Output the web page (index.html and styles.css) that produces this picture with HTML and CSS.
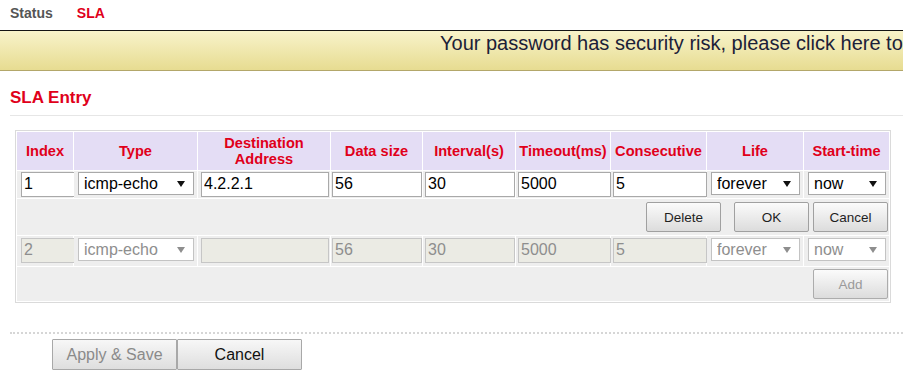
FILE: index.html
```html
<!DOCTYPE html>
<html lang="en">
<head>
<meta charset="utf-8">
<title>SLA</title>
<link rel="stylesheet" href="styles.css">
</head>
<body>
<nav class="tabs">
  <span class="tab">Status</span>
  <span class="tab tab-active">SLA</span>
</nav>
<div class="banner">Your password has security risk, please click here to change it.</div>
<section class="section">
  <h2 class="section-title">SLA Entry</h2>
  <table class="sla">
    <colgroup>
      <col class="w-idx"><col class="w-type"><col class="w-dest"><col class="w-size"><col class="w-int"><col class="w-tmo"><col class="w-con"><col class="w-life"><col class="w-start">
    </colgroup>
    <thead>
      <tr>
        <th>Index</th>
        <th>Type</th>
        <th>Destination<br>Address</th>
        <th>Data size</th>
        <th>Interval(s)</th>
        <th>Timeout(ms)</th>
        <th>Consecutive</th>
        <th>Life</th>
        <th>Start-time</th>
      </tr>
    </thead>
    <tbody>
      <tr class="row-edit">
        <td><input class="f f-idx" type="text" value="1"></td>
        <td><span class="sel s-type"><select><option>icmp-echo</option></select></span></td>
        <td><input class="f f-dest" type="text" value="4.2.2.1"></td>
        <td><input class="f f-size" type="text" value="56"></td>
        <td><input class="f f-int" type="text" value="30"></td>
        <td><input class="f f-tmo" type="text" value="5000"></td>
        <td><input class="f f-con" type="text" value="5"></td>
        <td><span class="sel s-life"><select><option>forever</option></select></span></td>
        <td><span class="sel s-start"><select><option>now</option></select></span></td>
      </tr>
      <tr class="row-btns">
        <td colspan="9" class="cell-btns">
          <div class="btns">
            <button class="btn" type="button">Delete</button>
            <button class="btn btn-ok" type="button">OK</button>
            <button class="btn btn-cancel" type="button">Cancel</button>
          </div>
        </td>
      </tr>
      <tr class="row-new">
        <td><input class="f f-idx" type="text" value="2" disabled></td>
        <td><span class="sel sel-off s-type"><select disabled><option>icmp-echo</option></select></span></td>
        <td><input class="f f-dest" type="text" value="" disabled></td>
        <td><input class="f f-size" type="text" value="56" disabled></td>
        <td><input class="f f-int" type="text" value="30" disabled></td>
        <td><input class="f f-tmo" type="text" value="5000" disabled></td>
        <td><input class="f f-con" type="text" value="5" disabled></td>
        <td><span class="sel sel-off s-life"><select disabled><option>forever</option></select></span></td>
        <td><span class="sel sel-off s-start"><select disabled><option>now</option></select></span></td>
      </tr>
      <tr class="row-add">
        <td colspan="9" class="cell-btns">
          <div class="btns">
            <button class="btn" type="button" disabled>Add</button>
          </div>
        </td>
      </tr>
    </tbody>
  </table>
</section>
<div class="actions">
  <button class="big-btn" type="button" disabled>Apply &amp; Save</button>
  <button class="big-btn" type="button">Cancel</button>
</div>
</body>
</html>
```
FILE: styles.css
```css
body {
  margin: 0;
  font-family: "Liberation Sans", Arial, sans-serif;
  background: #ffffff;
  color: #000000;
}

/* top tabs */
.tabs {
  display: flex;
  gap: 24px;
  height: 30px;
  box-sizing: border-box;
  padding: 5px 0 0 10px;
}
.tab {
  font-size: 14px;
  font-weight: bold;
  line-height: 16px;
  color: #555555;
}
.tab-active {
  color: #e0001a;
}

/* warning banner */
.banner {
  border-top: 1px solid #141414;
  border-bottom: 1px solid #b3a76a;
  background: linear-gradient(#f8f3ca, #e7dc91);
  height: 39px;
  padding-left: 440px;
  font-size: 20px;
  line-height: 24px;
  color: #1b2038;
  white-space: nowrap;
  overflow: hidden;
}

/* section */
.section {
  padding-left: 10px;
}
.section-title {
  margin: 17px 0 0;
  padding-bottom: 7px;
  font-size: 17px;
  line-height: 20px;
  font-weight: bold;
  color: #e0001a;
  border-bottom: 1px solid #e6e6e6;
}

/* table */
.sla {
  margin: 14px 0 0 5px;
  width: 876px;
  table-layout: fixed;
  border: 1px solid #dadada;
  border-spacing: 1px;
}
.w-idx { width: 56px; }
.w-type { width: 123px; }
.w-dest { width: 132px; }
.w-size { width: 91px; }
.w-int { width: 92px; }
.w-tmo { width: 94px; }
.w-con { width: 95px; }
.w-life { width: 96px; }
.w-start { width: 85px; }

.sla th {
  background: #e4ddf5;
  color: #e0001a;
  font-size: 14.6px;
  font-weight: bold;
  line-height: 16px;
  height: 38px;
  padding: 0;
  text-align: center;
  vertical-align: middle;
}
.sla td {
  background: #eeeeee;
  padding: 0;
  vertical-align: top;
}
.row-edit td { height: 27px; }
.row-btns td { height: 36px; }
.row-new td { height: 30px; }
.row-add td { height: 34px; }
.sla td.cell-btns { vertical-align: middle; }

/* text fields */
.f {
  display: block;
  box-sizing: border-box;
  height: 25px;
  margin-top: 1px;
  padding: 0 2px 2px;
  border: 1px solid #a9a9a9;
  background: #ffffff;
  font: 16px "Liberation Sans", Arial, sans-serif;
  color: #000000;
}
.f:disabled {
  background: #ebebe4;
  border-color: #c6c6c6;
  color: #8e8e8e;
}
.row-new .f,
.row-new .sel { margin-top: 2px; }

.f-idx { width: 54px; margin-left: 4px; }
.f-dest { width: 128px; margin-left: 3px; }
.f-size { width: 90px; margin-left: 1px; }
.f-int { width: 90px; margin-left: 2px; }
.f-tmo { width: 93px; margin-left: 2px; }
.f-con { width: 94px; margin-left: 2px; }

/* selects */
.sel {
  display: block;
  position: relative;
  margin-top: 1px;
}
.sel select {
  -webkit-appearance: none;
  appearance: none;
  display: block;
  width: 100%;
  height: 23px;
  box-sizing: border-box;
  margin: 0;
  padding: 0 0 1px 5px;
  border: 1px solid #a9a9a9;
  border-radius: 0;
  background: #ffffff;
  font: 16px "Liberation Sans", Arial, sans-serif;
  color: #000000;
}
.sel::after {
  content: "";
  position: absolute;
  right: 9px;
  top: 9px;
  border-style: solid;
  border-width: 6px 4px 0;
  border-color: #111111 transparent transparent;
  pointer-events: none;
}
.sel-off select {
  color: #8e8e8e;
  border-color: #c3c3c3;
  opacity: 1;
}
.sel-off::after {
  border-top-color: #8e8e8e;
}
.s-type { width: 116px; margin-left: 4px; }
.s-life { width: 89px; margin-left: 4px; }
.s-start { width: 78px; margin-left: 4px; }

/* row buttons */
.btns {
  display: flex;
  justify-content: flex-end;
  padding-right: 1px;
}
.btn {
  width: 75px;
  height: 30px;
  box-sizing: border-box;
  padding: 0;
  border: 1px solid #a0a0a0;
  border-radius: 2px;
  background: linear-gradient(#fbfbfb, #dcdcdc);
  font: 13.5px "Liberation Sans", Arial, sans-serif;
  color: #1f1f1f;
}
.btn:disabled {
  color: #9a9a9a;
  border-color: #acacac;
}
.btn-ok { margin-left: 13px; }
.btn-cancel { margin-left: 4px; }

/* bottom actions */
.actions {
  display: flex;
  margin: 29px 0 0 10px;
  padding: 5px 0 0 42px;
  border-top: 2px dotted #d6d6d6;
}
.big-btn {
  width: 125px;
  height: 31px;
  box-sizing: border-box;
  padding: 0;
  border: 1px solid #a8a8a8;
  border-radius: 1px;
  background: linear-gradient(#f7f7f7, #dedede);
  font: 16px "Liberation Sans", Arial, sans-serif;
  color: #111111;
}
.big-btn:disabled {
  color: #8a8a8a;
}
```
